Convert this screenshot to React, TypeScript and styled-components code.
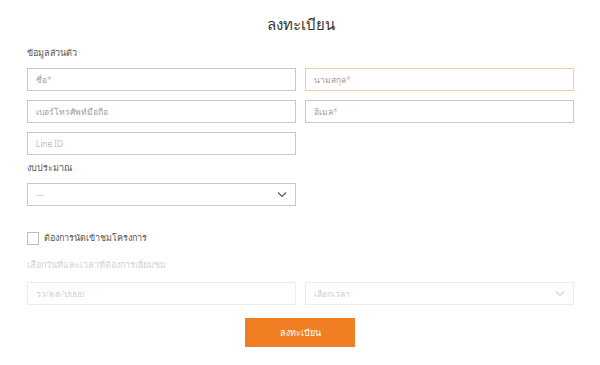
import React from 'react';
import styled, { createGlobalStyle } from 'styled-components';

const GlobalStyle = createGlobalStyle`
    html, body {
        margin: 0;
        padding: 0;
        background: #fff;
    }
    body {
        font-family: "Noto Sans", "Open Sans", sans-serif;
        font-weight: 300;
        color: #333;
    }
    * {
        box-sizing: border-box;
    }
`;

const Page = styled.div`
    width: 600px;
    height: 365px;
    padding: 14px 26px 0 27px;
    overflow: hidden;
`;

const Title = styled.h1`
    margin: 0 0 12px;
    font-size: 15px;
    font-weight: 300;
    line-height: 20px;
    text-align: center;
    color: #333;
`;

const Label = styled.div<{ $faded?: boolean; $gap?: number }>`
    font-size: 9px;
    line-height: 13px;
    color: ${({ $faded }) => ($faded ? '#d2d2d2' : '#555')};
    margin-bottom: ${({ $gap }) => $gap ?? 8}px;
`;

const Grid = styled.div`
    display: grid;
    grid-template-columns: 269px 269px;
    column-gap: 9px;
    row-gap: 9px;
`;

const Field = styled.div<{ $focus?: boolean; $faded?: boolean }>`
    position: relative;
    height: 23px;
    border: 1px solid ${({ $focus, $faded }) => ($focus ? '#f3cf9c' : $faded ? '#ececec' : '#c8c8c8')};
    background: #fff;
    display: flex;
    align-items: center;
    padding: 0 8px;
    font-size: 8.5px;
    color: ${({ $faded }) => ($faded ? '#d0d0d0' : '#a0a0a0')};
`;

const Chevron = styled.svg<{ $faded?: boolean }>`
    position: absolute;
    right: 8px;
    top: 7px;
    width: 10px;
    height: 7px;
    stroke: ${({ $faded }) => ($faded ? '#d4d4d4' : '#555')};
`;

const Gap = styled.div<{ $h: number }>`
    height: ${({ $h }) => $h}px;
`;

const CheckRow = styled.label`
    display: flex;
    align-items: center;
    gap: 5px;
    font-size: 9px;
    color: #555;
`;

const Box = styled.span`
    width: 12px;
    height: 13px;
    border: 1px solid #bdbdbd;
    background: #fff;
`;

const ButtonRow = styled.div`
    display: flex;
    justify-content: center;
    padding-right: 1px;
`;

const Submit = styled.button`
    width: 110px;
    height: 29px;
    border: none;
    background: #f07f23;
    color: #fff;
    font-family: inherit;
    font-weight: 300;
    font-size: 9px;
    cursor: pointer;
`;

const Arrow = ({ faded }: { faded?: boolean }) => (
    <Chevron $faded={faded} viewBox="0 0 10 7" fill="none" strokeWidth="1.1">
        <path d="M1 1.5 L5 5.5 L9 1.5" />
    </Chevron>
);

export default function App() {
    return (
        <Page>
            <GlobalStyle />
            <Title>ลงทะเบียน</Title>
            <Label $gap={9}>ข้อมูลส่วนตัว</Label>
            <Grid>
                <Field>ชื่อ*</Field>
                <Field $focus>นามสกุล*</Field>
                <Field>เบอร์โทรศัพท์มือถือ</Field>
                <Field>อีเมล*</Field>
                <Field>Line ID</Field>
            </Grid>
            <Gap $h={6} />
            <Label $gap={9}>งบประมาณ</Label>
            <Grid>
                <Field>
                    ---
                    <Arrow />
                </Field>
            </Grid>
            <Gap $h={25} />
            <CheckRow>
                <Box />
                ต้องการนัดเข้าชมโครงการ
            </CheckRow>
            <Gap $h={13} />
            <Label $faded $gap={11}>เลือกวันที่และเวลาที่ต้องการเยี่ยมชม</Label>
            <Grid>
                <Field $faded>วว/ดด/ปปปป</Field>
                <Field $faded>
                    เลือกเวลา
                    <Arrow faded />
                </Field>
            </Grid>
            <Gap $h={13} />
            <ButtonRow>
                <Submit>ลงทะเบียน</Submit>
            </ButtonRow>
        </Page>
    );
}
